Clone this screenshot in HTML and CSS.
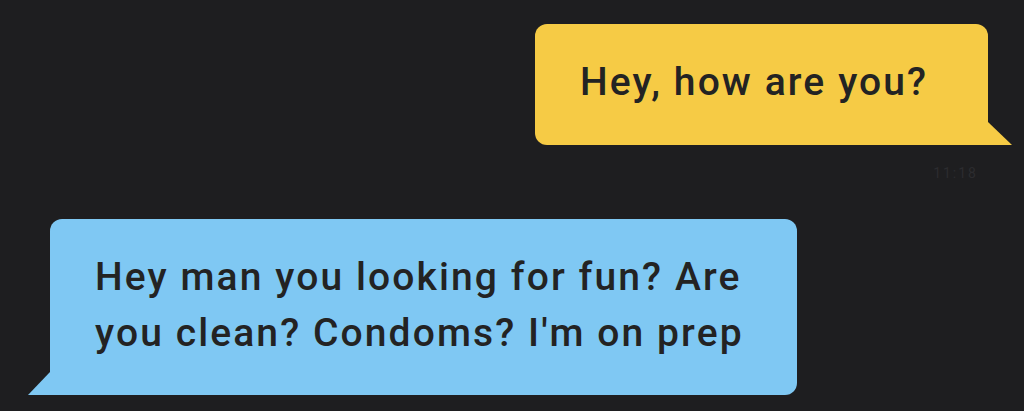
FILE: index.html
```html
<!DOCTYPE html>
<html lang="en">
<head>
    <meta charset="UTF-8">
    <title>Chat</title>
    <link rel="stylesheet" href="styles.css">
</head>
<body>
<div class="chat">
    <div class="row out">
        <div class="bubble yellow">Hey, how are you?</div>
        <div class="time">11:18</div>
    </div>
    <div class="row in">
        <div class="bubble blue">Hey man you looking for fun? Are you clean? Condoms? I'm on prep</div>
    </div>
</div>
</body>
</html>
```

FILE: styles.css
```css
body { background: #1e1e20; margin: 0; font-family: 'Roboto', 'DejaVu Sans', sans-serif; overflow: hidden; }
.chat { display: flex; flex-direction: column; padding: 24px 0 0 0; height: 411px; box-sizing: border-box; }
.row { display: flex; flex-direction: column; }
.row.out { align-items: flex-end; padding-right: 36px; }
.row.in { align-items: flex-start; padding-left: 50px; }
.bubble { position: relative; box-sizing: border-box; color: #232323; font-size: 39px; font-weight: 500; line-height: 56px; letter-spacing: 2.1px; }
.yellow { background: #f6cb45; width: 453px; height: 121px; padding: 30px 20px 0 45px; border-radius: 12px 12px 0 12px; }
.yellow::after { content: ""; position: absolute; right: -24px; bottom: 0; width: 24px; height: 23px; background: #f6cb45; clip-path: polygon(0 0, 100% 100%, 0 100%); }
.blue { background: #7fc8f3; width: 747px; height: 176px; padding: 30px 20px 0 45px; border-radius: 12px 12px 12px 0; }
.blue::after { content: ""; position: absolute; left: -22px; bottom: 0; width: 22px; height: 23px; background: #7fc8f3; clip-path: polygon(100% 0, 100% 100%, 0 100%); }
.time { color: #2c2c2f; font-size: 14px; line-height: 16px; margin-top: 20px; padding-right: 10px; margin-bottom: 38px; letter-spacing: 2px; }
```
